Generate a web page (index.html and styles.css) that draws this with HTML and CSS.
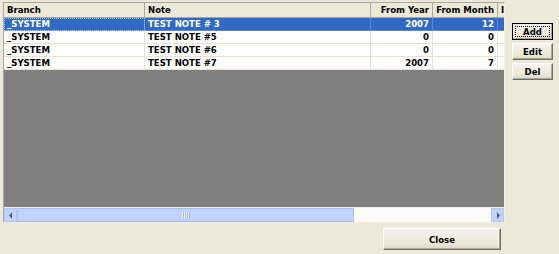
FILE: index.html
```html
<!DOCTYPE html>
<html>
<head>
<meta charset="utf-8">
<link rel="stylesheet" href="styles.css">
</head>
<body>
<div class="window">
  <div class="top">
    <div class="grid">
      <div class="table">
        <div class="row head">
          <div class="c branch">Branch</div>
          <div class="c note">Note</div>
          <div class="c year r">From Year</div>
          <div class="c month r">From Month</div>
          <div class="c extra">I</div>
        </div>
        <div class="row sel">
          <div class="c branch focus">_SYSTEM</div>
          <div class="c note">TEST NOTE # 3</div>
          <div class="c year r">2007</div>
          <div class="c month r">12</div>
          <div class="c extra"></div>
        </div>
        <div class="row">
          <div class="c branch">_SYSTEM</div>
          <div class="c note">TEST NOTE #5</div>
          <div class="c year r">0</div>
          <div class="c month r">0</div>
          <div class="c extra"></div>
        </div>
        <div class="row">
          <div class="c branch">_SYSTEM</div>
          <div class="c note">TEST NOTE #6</div>
          <div class="c year r">0</div>
          <div class="c month r">0</div>
          <div class="c extra"></div>
        </div>
        <div class="row">
          <div class="c branch">_SYSTEM</div>
          <div class="c note">TEST NOTE #7</div>
          <div class="c year r">2007</div>
          <div class="c month r">7</div>
          <div class="c extra"></div>
        </div>
      </div>
      <div class="empty"></div>
      <div class="hscroll">
        <div class="arrow"><svg width="6" height="7" viewBox="0 0 6 7"><path d="M4 0 L1 3.5 L4 7 Z" fill="#4d6185"/></svg></div>
        <div class="thumb"><span class="grip"></span></div>
        <div class="track"></div>
        <div class="arrow"><svg width="6" height="7" viewBox="0 0 6 7"><path d="M2 0 L5 3.5 L2 7 Z" fill="#4d6185"/></svg></div>
      </div>
    </div>
    <div class="side">
      <button class="btn default">Add</button>
      <button class="btn">Edit</button>
      <button class="btn">Del</button>
    </div>
  </div>
  <div class="bottom">
    <button class="btn close">Close</button>
  </div>
</div>
</body>
</html>
```
FILE: styles.css
```css
html, body {
  margin: 0;
  padding: 0;
  background: #ece9d8;
}
body {
  width: 559px;
  height: 254px;
  overflow: hidden;
  font-family: "DejaVu Sans Condensed", "DejaVu Sans", Verdana, sans-serif;
  font-weight: bold;
  font-size: 9.5px;
  color: #000;
}
.window {
  padding: 2px 0 0 3px;
  display: flex;
  flex-direction: column;
}
.top {
  display: flex;
  align-items: flex-start;
}
.grid {
  flex-shrink: 0;
  width: 500px;
  height: 219px;
  border: 1px solid;
  border-color: #a7a6aa #f1efe2 #f1efe2 #a7a6aa;
  background: #808080;
  display: flex;
  flex-direction: column;
  overflow: hidden;
}
.table {
  display: flex;
  flex-direction: column;
}
.row {
  display: flex;
  height: 13px;
  background: #fff;
}
.row .c {
  flex-shrink: 0;
  box-sizing: border-box;
  height: 13px;
  line-height: 12px;
  padding: 0 3px;
  border-right: 1px solid #e6e3d3;
  border-bottom: 1px solid #e6e3d3;
  white-space: nowrap;
  overflow: hidden;
}
.row.head {
  height: 15px;
  background: #ece9d8;
}
.row.head .c {
  height: 15px;
  line-height: 14px;
  border-right: 1px solid #aca899;
  border-bottom: 1px solid #aca899;
  color: #000;
}
.row.sel {
  background: #316ac5;
  color: #fff;
}
.row.sel .c {
  border-right-color: #5b87cf;
  border-bottom-color: #5b87cf;
}
.row.sel .c.focus {
  outline: 1px dotted #a9c2ea;
  outline-offset: -1px;
}
.branch { width: 141px; }
.note { width: 226px; }
.year { width: 62px; }
.month { width: 65px; }
.extra { width: 20px; }
.r { text-align: right; }
.row .c.extra { border-right: none; }
.empty {
  flex: 1;
}
.hscroll {
  flex-shrink: 0;
  height: 14px;
  display: flex;
  background: #f5f4ea;
  align-items: stretch;
  border-top: 1px solid #eeede5;
}
.arrow {
  width: 13px;
  background: #c1d3fb;
  border: 1px solid #b4c8f6;
  box-sizing: border-box;
  display: flex;
  align-items: center;
  justify-content: center;
}
.thumb {
  width: 337px;
  background: #c1d3fb;
  border: 1px solid #aabff0;
  box-sizing: border-box;
  display: flex;
  align-items: center;
  justify-content: center;
}
.grip {
  width: 8px;
  height: 6px;
  background: repeating-linear-gradient(90deg, #eef3fd 0 1px, #a4b9e6 1px 2px);
}
.track {
  flex: 1;
  background: #fbfbf8;
}
.side {
  display: flex;
  flex-direction: column;
  gap: 3px;
  padding: 21px 0 0 7px;
}
.btn {
  font-family: "DejaVu Sans Condensed", "DejaVu Sans", Verdana, sans-serif;
  font-weight: bold;
  font-size: 9.5px;
  color: #000;
  background: linear-gradient(#f4f3ee, #ece9d8 70%, #dedbc9);
  border: 1px solid;
  border-color: #fff #716f64 #716f64 #fff;
  box-shadow: inset -1px -1px 0 #aca899;
  width: 41px;
  height: 17px;
  padding: 0;
  margin: 0;
}
.btn.default {
  border: 1px solid #000;
  outline: 1px dotted #000;
  outline-offset: -4px;
}
.bottom {
  display: flex;
  justify-content: flex-start;
  padding: 5px 0 0 380px;
}
.btn.close {
  width: 118px;
  height: 22px;
}
```
